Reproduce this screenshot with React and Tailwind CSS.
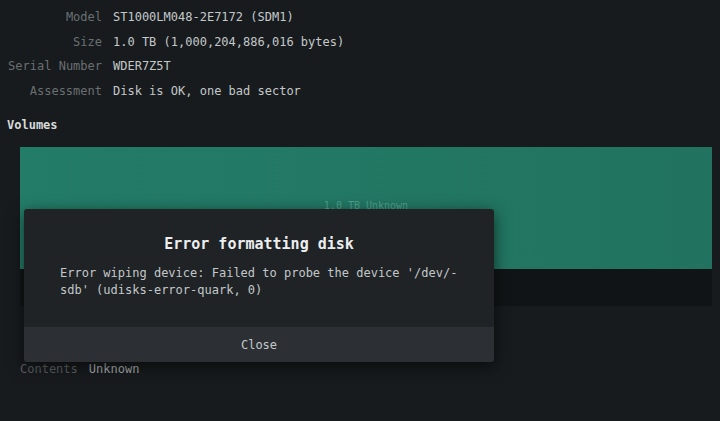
export default function App() {
  const mono = { fontFamily: '"DejaVu Sans Mono", "Liberation Mono", monospace' };
  const rows = [
    ["Model", "ST1000LM048-2E7172 (SDM1)"],
    ["Size", "1.0 TB (1,000,204,886,016 bytes)"],
    ["Serial Number", "WDER7Z5T"],
    ["Assessment", "Disk is OK, one bad sector"],
  ];
  return (
    <div className="relative w-[720px] h-[421px] overflow-hidden bg-[#171b1d] text-[12px]" style={mono}>
      <div className="pt-[5px]">
        {rows.map(([k, v]) => (
          <div key={k} className="flex leading-[24.5px] h-[24.5px]">
            <div className="w-[102px] text-right text-[#6a6f72] shrink-0">{k}</div>
            <div className="ml-[11px] text-[#c4c8ca] whitespace-nowrap">{v}</div>
          </div>
        ))}
      </div>
      <div className="pl-[7px] mt-[10px] h-[24px] leading-[24px] font-bold text-[#d8dadb]">Volumes</div>
      <div className="ml-[20px] mr-[8px] mt-[10px]">
        <div className="h-[122px] bg-[linear-gradient(90deg,#237c68,#21735f)] flex items-end justify-center pb-[56px]">
          <span className="text-[10px] text-[#4fa08c]">1.0 TB Unknown</span>
        </div>
        <div className="h-[37px] bg-[#111416]"></div>
      </div>
      <div className="flex pl-[20px] mt-[53px] leading-[20px]">
        <span className="text-[#5c6164]">Contents</span>
        <span className="ml-[11px] text-[#a9adaf]">Unknown</span>
      </div>

      <div className="absolute left-[24px] top-[209px] w-[470px] h-[153px] bg-[#1f2326] rounded-[3px] shadow-[0_4px_16px_rgba(0,0,0,0.6)] flex flex-col overflow-hidden">
        <div className="flex-1 px-[36px] pt-[24px]">
          <div className="text-center text-[15px] font-bold text-[#eceeef] leading-[22px]">Error formatting disk</div>
          <div className="mt-[10px] text-[#c3c7c9] leading-[17px]">
            Error wiping device: Failed to probe the device '/dev/-<br />sdb' (udisks-error-quark, 0)
          </div>
        </div>
        <div className="h-[35px] bg-[#2c3034] flex items-center justify-center text-[#c6cacc]">Close</div>
      </div>
    </div>
  );
}
